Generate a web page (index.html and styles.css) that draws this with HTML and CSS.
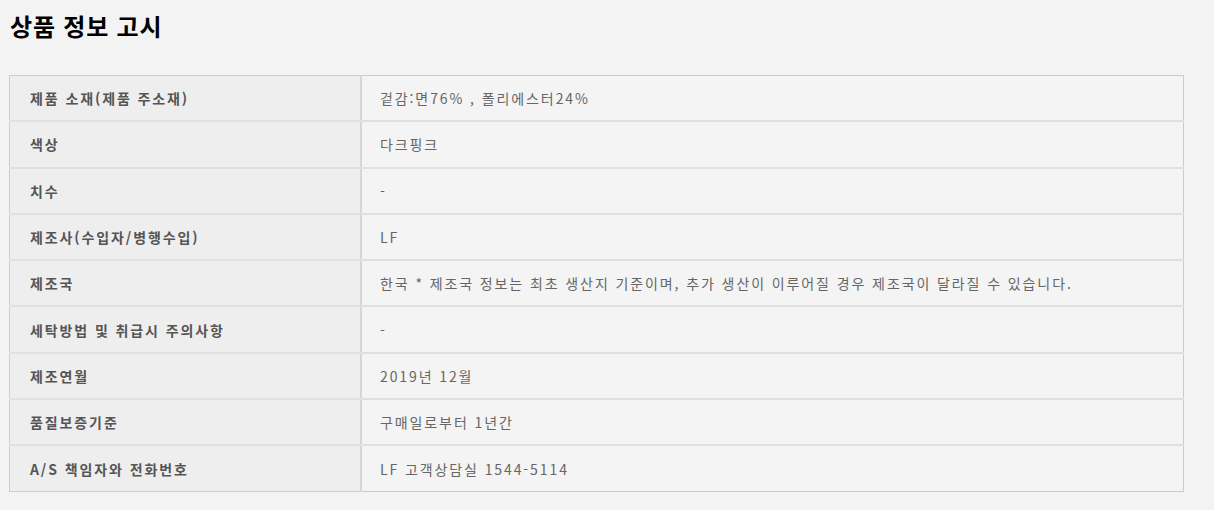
FILE: index.html
```html
<!DOCTYPE html>
<html lang="ko">
<head>
<meta charset="utf-8">
<title>상품 정보 고시</title>
<link rel="stylesheet" href="styles.css">
</head>
<body>
<h2 class="title">상품 정보 고시</h2>
<table class="info">
  <tbody>
    <tr><th>제품 소재(제품 주소재)</th><td>겉감:면76% , 폴리에스터24%</td></tr>
    <tr><th>색상</th><td>다크핑크</td></tr>
    <tr><th>치수</th><td>-</td></tr>
    <tr><th>제조사(수입자/병행수입)</th><td>LF</td></tr>
    <tr><th>제조국</th><td>한국 * 제조국 정보는 최초 생산지 기준이며, 추가 생산이 이루어질 경우 제조국이 달라질 수 있습니다.</td></tr>
    <tr><th>세탁방법 및 취급시 주의사항</th><td>-</td></tr>
    <tr><th>제조연월</th><td>2019년 12월</td></tr>
    <tr><th>품질보증기준</th><td>구매일로부터 1년간</td></tr>
    <tr><th>A/S 책임자와 전화번호</th><td>LF 고객상담실 1544-5114</td></tr>
  </tbody>
</table>
</body>
</html>
```
FILE: styles.css
```css
html, body {
  margin: 0;
  padding: 0;
  background: #f3f3f3;
}
body {
  font-family: "Noto Sans CJK KR", "Noto Sans", sans-serif;
}
.title {
  margin: 0;
  padding: 10px 10px 0 10px;
  height: 31px;
  font-size: 24px;
  line-height: 31px;
  font-weight: bold;
  color: #000;
  letter-spacing: 0.8px;
}
.info {
  margin: 34px 0 0 9px;
  width: 1175px;
  border-collapse: collapse;
  border: 1px solid #cccccc;
  font-size: 14px;
  letter-spacing: 1.9px;
}
.info th,
.info td {
  height: 44.3px;
  padding: 0 0 0 20px;
  border-bottom: 2px solid #e0e0e0;
  text-align: left;
  vertical-align: middle;
}
.info td {
  padding-left: 18px;
}
.info tr:last-child th,
.info tr:last-child td {
  border-bottom: 1px solid #cccccc;
}
.info th {
  width: 330px;
  background: #eeeeee;
  color: #555555;
  font-weight: bold;
  border-right: 2px solid #d6d6d6;
}
.info td {
  background: #f4f4f4;
  color: #666666;
  font-weight: normal;
}
```
